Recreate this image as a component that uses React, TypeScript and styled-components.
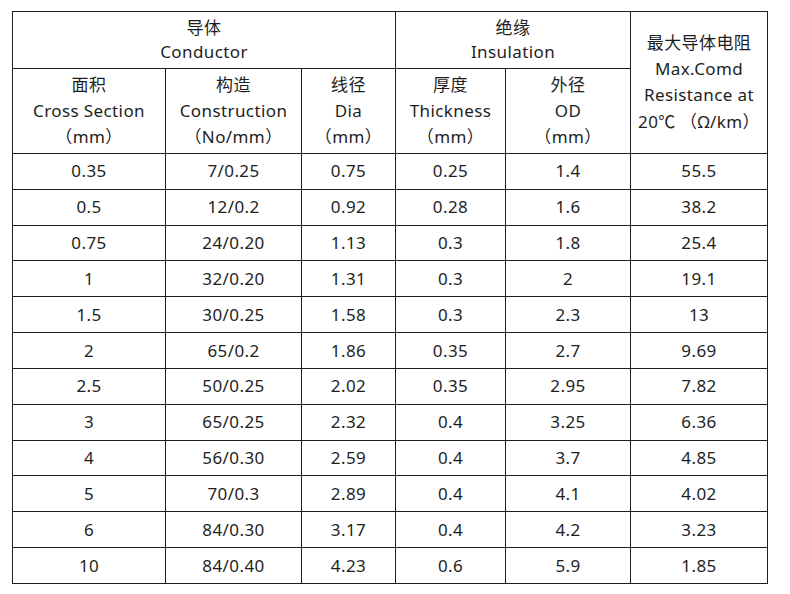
import React from "react";
import styled, { createGlobalStyle } from "styled-components";

const GlobalStyle = createGlobalStyle`
  html, body { margin: 0; padding: 0; background: #fff; }
  body { font-family: "Noto Sans", "Noto Sans CJK SC", sans-serif; color: #1e1e1e; }
`;

const Page = styled.div`
  width: 790px;
  height: 594px;
  padding: 11px 0 0 12px;
  box-sizing: border-box;
  background: #fff;
`;

const Grid = styled.div`
  display: grid;
  grid-template-columns: 153px 136px 94px 110px 125px 137px;
  grid-template-rows: 57px 85px repeat(12, 35.833px);
  width: max-content;
  border-left: 1px solid #1e1e1e;
  border-top: 1px solid #1e1e1e;
`;

const Cell = styled.div<{ $col?: string; $row?: string; $lh?: number }>`
  grid-column: ${(p) => p.$col ?? "auto"};
  grid-row: ${(p) => p.$row ?? "auto"};
  border-right: 1px solid #1e1e1e;
  border-bottom: 1px solid #1e1e1e;
  display: flex;
  flex-direction: column;
  align-items: center;
  justify-content: center;
  text-align: center;
  font-size: 17px;
  letter-spacing: 0.4px;
  line-height: ${(p) => p.$lh ?? 24}px;
  white-space: nowrap;
`;

const Line = styled.span`
  display: block;
`;

const Cjk = styled.span`
  font-family: "Noto Sans CJK SC", sans-serif;
  letter-spacing: 0;
`;

const rows: string[][] = [
  ["0.35", "7/0.25", "0.75", "0.25", "1.4", "55.5"],
  ["0.5", "12/0.2", "0.92", "0.28", "1.6", "38.2"],
  ["0.75", "24/0.20", "1.13", "0.3", "1.8", "25.4"],
  ["1", "32/0.20", "1.31", "0.3", "2", "19.1"],
  ["1.5", "30/0.25", "1.58", "0.3", "2.3", "13"],
  ["2", "65/0.2", "1.86", "0.35", "2.7", "9.69"],
  ["2.5", "50/0.25", "2.02", "0.35", "2.95", "7.82"],
  ["3", "65/0.25", "2.32", "0.4", "3.25", "6.36"],
  ["4", "56/0.30", "2.59", "0.4", "3.7", "4.85"],
  ["5", "70/0.3", "2.89", "0.4", "4.1", "4.02"],
  ["6", "84/0.30", "3.17", "0.4", "4.2", "3.23"],
  ["10", "84/0.40", "4.23", "0.6", "5.9", "1.85"],
];

const subHeads: string[][] = [
  ["面积", "Cross Section", "（mm）"],
  ["构造", "Construction", "（No/mm）"],
  ["线径", "Dia", "（mm）"],
  ["厚度", "Thickness", "（mm）"],
  ["外径", "OD", "（mm）"],
];

export default function App() {
  return (
    <>
      <GlobalStyle />
      <Page>
        <Grid>
          <Cell $col="1 / span 3" $row="1">
            <Line>导体</Line>
            <Line>Conductor</Line>
          </Cell>
          <Cell $col="4 / span 2" $row="1">
            <Line>绝缘</Line>
            <Line>Insulation</Line>
          </Cell>
          <Cell $col="6" $row="1 / span 2" $lh={26}>
            <Line>最大导体电阻</Line>
            <Line>Max.Comd</Line>
            <Line>Resistance at</Line>
            <Line>
              20<Cjk>℃</Cjk> （Ω/km）
            </Line>
          </Cell>
          {subHeads.map((h, i) => (
            <Cell key={i} $col={`${i + 1}`} $row="2" $lh={26}>
              {h.map((t, j) => (
                <Line key={j}>{t}</Line>
              ))}
            </Cell>
          ))}
          {rows.map((r, ri) =>
            r.map((v, ci) => <Cell key={`${ri}-${ci}`}>{v}</Cell>)
          )}
        </Grid>
      </Page>
    </>
  );
}
